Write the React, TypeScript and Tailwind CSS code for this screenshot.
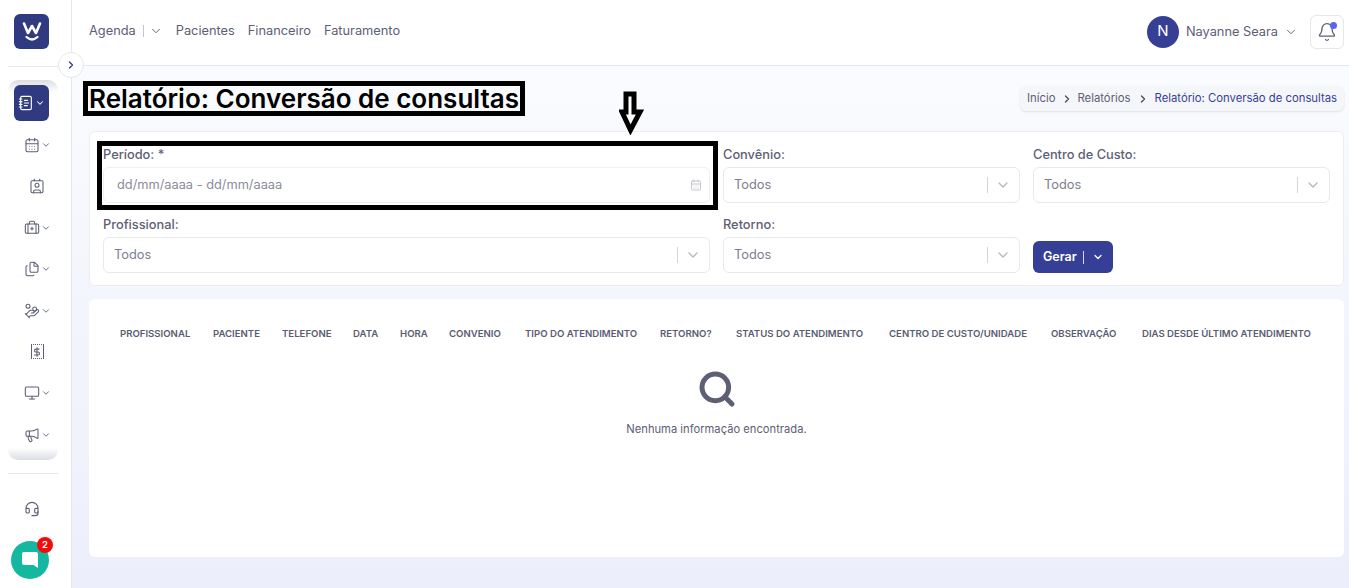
import {
  BriefcaseMedicalIcon,
  CalendarDaysIcon,
  ChevronDownIcon,
  ChevronRightIcon,
  ContactIcon,
  DollarSignIcon,
  FilesIcon,
  HandCoinsIcon,
  HeadsetIcon,
  MegaphoneIcon,
  MonitorIcon,
  NotebookTextIcon,
  BellIcon,
  SearchIcon,
} from "lucide-react";
import React from "react";

const font = { fontFamily: "Inter, 'Liberation Sans', sans-serif" };

const MoneyIcon = ({ className }: { className?: string }) => (
  <span className="w-[13px] h-[15px] border-[1.5px] border-dotted [border-left-style:solid] [border-right-style:solid] border-[#5d6075] flex items-center justify-center">
    <DollarSignIcon className={className} strokeWidth={2.6} />
  </span>
);

const navItems = [
  { icon: CalendarDaysIcon, chevron: true },
  { icon: ContactIcon, chevron: false },
  { icon: BriefcaseMedicalIcon, chevron: true },
  { icon: FilesIcon, chevron: true },
  { icon: HandCoinsIcon, chevron: true },
  { icon: null, chevron: false },
  { icon: MonitorIcon, chevron: true },
  { icon: MegaphoneIcon, chevron: true },
];

const columns = [
  "Profissional",
  "Paciente",
  "Telefone",
  "Data",
  "Hora",
  "Convenio",
  "Tipo do atendimento",
  "Retorno?",
  "Status do atendimento",
  "Centro de custo/unidade",
  "Observação",
  "Dias desde último atendimento",
];

const Sidebar = () => (
  <aside className="w-[72px] shrink-0 h-[588px] bg-white border-r border-[#e5e7ef] flex flex-col items-center pr-[5px] relative">
    <div className="h-[66px] w-full flex justify-center pt-[14px] pr-[3px] shrink-0">
      <div className="w-[35px] h-[35px] rounded-[6px] bg-[#2f3a80] flex items-center justify-center">
        <svg width="22" height="22" viewBox="0 0 22 22" fill="none" stroke="white" strokeLinecap="round" strokeLinejoin="round">
          <path d="M3 2.5 L7 12 L11 5 L15 12 L19 2.5" strokeWidth="2.6" />
          <path d="M5.5 16 Q11 21 16.5 16" strokeWidth="2.2" />
        </svg>
      </div>
    </div>
    <div className="w-[50px] border-t border-[#e5e7ef] absolute top-[66px] left-[8px]" />
    <div className="w-[50px] h-[12px] rounded-t-[10px] bg-gradient-to-b from-[#dcdde3] to-white mt-[14px] shrink-0" />
    <div className="w-[35px] h-[36px] rounded-[6px] bg-[#2f3a80] -mt-[7px] mr-[3px] flex items-center justify-center gap-px shrink-0 text-white">
      <NotebookTextIcon className="w-[16px] h-[16px]" strokeWidth={1.7} />
      <ChevronDownIcon className="w-[10px] h-[10px]" strokeWidth={2.5} />
    </div>
    <div className="flex flex-col items-center gap-[19.4px] mt-[13px] ml-[8px]">
      {navItems.map((item, i) => (
        <div key={i} className="h-[22px] w-[36px] flex items-center justify-center gap-px text-[#5d6075]">
          {item.icon ? (
            <item.icon className="w-[16px] h-[16px]" strokeWidth={1.6} />
          ) : (
            <MoneyIcon className="w-[10px] h-[10px]" />
          )}
          {item.chevron && <ChevronDownIcon className="w-[10px] h-[10px]" strokeWidth={2.2} />}
        </div>
      ))}
    </div>
    <div className="w-[50px] h-[12px] rounded-b-[10px] bg-gradient-to-t from-[#dcdde3] to-white mt-[2px] shrink-0" />
    <div className="w-[50px] border-t border-[#e5e7ef] mt-[13px]" />
    <HeadsetIcon className="w-[16px] h-[16px] text-[#5d6075] mt-[27px] mr-[2px]" strokeWidth={1.7} />

    <button className="absolute top-[52px] left-[58px] w-[26px] h-[26px] rounded-full bg-white border border-[#e5e7ef] flex items-center justify-center text-[#2f3a80] z-10">
      <ChevronRightIcon className="w-[12px] h-[12px]" strokeWidth={2.5} />
    </button>
    <div className="absolute top-[541px] left-[11px] w-[38px] h-[38px] rounded-full bg-[#14b8a0] flex items-center justify-center">
      <svg width="18" height="18" viewBox="0 0 18 18" fill="white">
        <path d="M3 1 H15 A2 2 0 0 1 17 3 V17 L12.5 14 H3 A2 2 0 0 1 1 12 V3 A2 2 0 0 1 3 1 Z" />
      </svg>
      <span className="absolute -top-[4px] left-[26px] w-[16px] h-[16px] rounded-full bg-[#f50a0a] text-white text-[9.5px] font-semibold flex items-center justify-center">
        2
      </span>
    </div>
  </aside>
);

const Header = () => (
  <header className="h-[66px] shrink-0 bg-white border-b border-[#e5e7ef] flex items-center justify-between pb-[2px] pl-[17px] pr-[5px]">
    <nav className="flex items-center text-[12.8px] text-[#5d6075] mb-[2px]">
      <span>Agenda</span>
      <span className="w-px h-[12px] bg-[#c4c6d0] ml-[7px] mr-[5px]" />
      <ChevronDownIcon className="w-[14px] h-[14px] mr-[13px]" strokeWidth={1.6} />
      <span className="mr-[13px]">Pacientes</span>
      <span className="mr-[13px]">Financeiro</span>
      <span>Faturamento</span>
    </nav>
    <div className="flex items-center">
      <div className="w-[32px] h-[32px] rounded-full bg-[#353f95] text-white text-[15px] flex items-center justify-center">
        N
      </div>
      <span className="ml-[7px] text-[12.8px] text-[#5d6075]">Nayanne Seara</span>
      <ChevronDownIcon className="w-[14px] h-[14px] ml-[6px] text-[#5d6075]" strokeWidth={1.6} />
      <div className="ml-[12px] w-[34px] h-[34px] rounded-[6px] border border-[#e5e7ef] flex items-center justify-center relative text-[#5d6075]">
        <BellIcon className="w-[20px] h-[20px]" strokeWidth={1.6} />
        <span className="absolute top-[6px] right-[6px] w-[7px] h-[7px] rounded-full bg-[#5b63f5]" />
      </div>
    </div>
  </header>
);

const Field = ({ label, value }: { label: string; value: string }) => (
  <div>
    <div className="text-[12.8px] leading-[16px] font-medium text-[#5d6075] h-[16px] mt-[2px] mb-[4px]">{label}</div>
    <div className="h-[36px] rounded-[6px] border border-[#e8e9ee] bg-white flex items-center pl-[10px] text-[12.8px] text-[#7d8090]">
      <span className="flex-1">{value}</span>
      <span className="w-px h-[16px] bg-[#d5d6dc]" />
      <ChevronDownIcon className="w-[16px] h-[16px] text-[#b5b7c0] ml-[7px] mr-[8px]" strokeWidth={2} />
    </div>
  </div>
);

const FilterCard = () => (
  <div className="bg-white rounded-[6px] border border-[#eceef3] h-[155px] px-[13px] pt-[13px] grid grid-cols-[607px_297px_297px] gap-x-[13px] gap-y-[2px] content-start">
    <div>
      <div className="text-[12.8px] leading-[16px] font-medium text-[#5d6075] h-[16px] mt-[2px] mb-[4px]">Período: *</div>
      <div className="h-[36px] rounded-[6px] border border-[#eeeff3] bg-white flex items-center pl-[13px] pr-[7px] text-[12.8px] text-[#8b8d9b]">
        <span className="flex-1">dd/mm/aaaa - dd/mm/aaaa</span>
        <CalendarDaysIcon className="w-[12px] h-[12px] text-[#c5c7d2]" />
      </div>
    </div>
    <Field label="Convênio:" value="Todos" />
    <Field label="Centro de Custo:" value="Todos" />
    <div className="mt-[10px]">
      <Field label="Profissional:" value="Todos" />
    </div>
    <div className="mt-[10px]">
      <Field label="Retorno:" value="Todos" />
    </div>
    <div className="mt-[10px] pt-[26px]">
      <button className="w-[80px] h-[32px] rounded-[6px] bg-[#353f95] text-white text-[12.5px] font-semibold flex items-center pl-[10px]">
        Gerar
        <span className="w-px h-[13px] bg-white/80 ml-[6px] mr-[8px]" />
        <ChevronDownIcon className="w-[12px] h-[12px]" strokeWidth={2.5} />
      </button>
    </div>
  </div>
);

const ResultsCard = () => (
  <div className="bg-white rounded-[6px] h-[258px] mt-[13px] pt-[28px] flex flex-col items-center">
    <div className="w-full pl-[31px] grid grid-cols-[93px_69px_71px_47px_49px_76px_135px_76px_153px_162px_91px_1fr] text-[9.6px] leading-[14px] font-semibold uppercase text-[#5a5d72] whitespace-nowrap">
      {columns.map((col) => (
        <div key={col}>{col}</div>
      ))}
    </div>
    <SearchIcon className="w-[40px] h-[40px] text-[#5d6075] mt-[28px]" strokeWidth={3} />
    <div className="text-[11.2px] leading-[14px] text-[#5d6075] mt-[13px]">Nenhuma informação encontrada.</div>
  </div>
);

const App = () => {
  return (
    <div className="w-[1349px] h-[588px] flex overflow-hidden relative bg-white" style={font}>
      <Sidebar />
      <div className="flex-1 flex flex-col min-w-0">
        <Header />
        <main className="flex-1 bg-gradient-to-b from-[#fafbfe] to-[#eceffb] pl-[17px] pr-[5px]">
          <div className="h-[65px] flex items-center justify-between">
            <h1 className="text-[26px] font-semibold text-black">Relatório: Conversão de consultas</h1>
            <div className="h-[25px] rounded-[6px] bg-[#f5f6fa] shadow-[0_1px_2px_rgba(0,0,0,0.1)] flex items-center px-[7px] text-[11.3px] text-[#5d6075]">
              Início
              <ChevronRightIcon className="w-[12px] h-[12px] mx-[5px] text-[#4b4e63]" strokeWidth={2.8} />
              Relatórios
              <ChevronRightIcon className="w-[12px] h-[12px] mx-[6px] text-[#4b4e63]" strokeWidth={2.8} />
              <span className="text-[#353f95]">Relatório: Conversão de consultas</span>
            </div>
          </div>
          <FilterCard />
          <ResultsCard />
        </main>
      </div>

      {/* black annotations drawn over the screenshot */}
      <div className="absolute left-[83px] top-[81px] w-[442px] h-[35px] border-[5px] border-black" />
      <div className="absolute left-[97px] top-[141px] w-[621px] h-[69px] border-[5px] border-black" />
      <svg className="absolute left-[619px] top-[91px]" width="25" height="44" viewBox="0 0 25 44" fill="white" stroke="black" strokeWidth="5">
        <path d="M7 3 H15 V21 H21 L11.5 39 L3 21 H7 Z" />
      </svg>
    </div>
  );
};

export default App;
